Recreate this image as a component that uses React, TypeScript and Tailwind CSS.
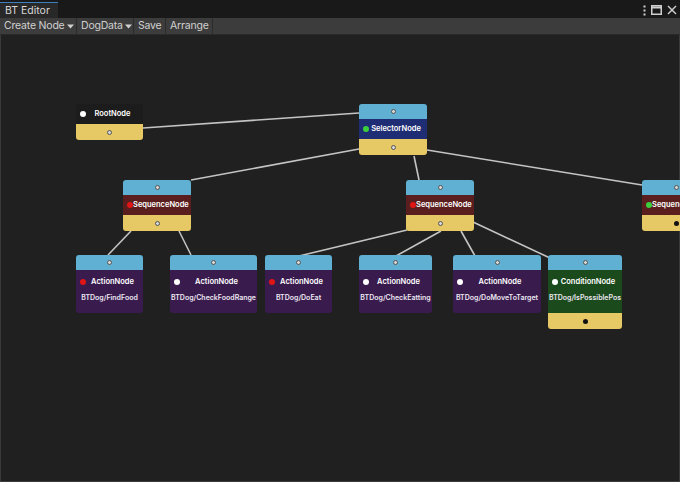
import { Fragment } from "react";

type NodeProps = {
  x: number;
  y: number;
  w: number;
  title: string;
  sub?: string;
  body: string;
  dot: string;
  topPort?: boolean;
  bottomPort?: "ring" | "solid";
  tall?: boolean;
};

function Port({ solid }: { solid?: boolean }) {
  return solid ? (
    <span className="block h-[5px] w-[5px] rounded-full bg-[#111]" />
  ) : (
    <span className="block h-[5px] w-[5px] rounded-full border border-[#555] bg-[#d8d8d8]" />
  );
}

function BTNode({ x, y, w, title, sub, body, dot, topPort = true, bottomPort, tall }: NodeProps) {
  return (
    <div className="absolute flex flex-col text-white" style={{ left: x, top: y, width: w }}>
      {topPort && (
        <div className="flex h-[15px] items-center justify-center rounded-t-[3px] bg-[#5fb0d2]">
          <Port />
        </div>
      )}
      <div
        className={`flex flex-col justify-center px-[4px] ${tall ? "h-[43px] gap-[8px] pb-[4px]" : "h-[20px]"} ${
          bottomPort ? "" : "rounded-b-[3px]"
        }`}
        style={{ backgroundColor: body }}
      >
        <div className="flex items-center">
          <span className="block h-[6px] w-[6px] shrink-0 rounded-full" style={{ backgroundColor: dot }} />
          <span className="flex-1 whitespace-nowrap text-center text-[7.5px] font-semibold leading-none">{title}</span>
        </div>
        {sub && (
          <div className="-mx-[4px] whitespace-nowrap text-center text-[7px] font-semibold leading-none text-[#ebe6f0]">
            {sub}
          </div>
        )}
      </div>
      {bottomPort && (
        <div className="flex h-[16px] items-center justify-center rounded-b-[3px] bg-[#e6c964]">
          <Port solid={bottomPort === "solid"} />
        </div>
      )}
    </div>
  );
}

const edges: [number, number, number, number][] = [
  [142, 128, 358, 113],
  [190, 180, 358, 149],
  [413, 156, 418, 180],
  [426, 150, 641, 185],
  [130, 231, 107, 255],
  [178, 231, 190, 255],
  [406, 230, 298, 256],
  [440, 231, 395, 256],
  [460, 231, 474, 256],
  [472, 222, 549, 258],
];

const buttons = [
  { label: "Create Node", caret: true, w: "w-[77px]" },
  { label: "DogData", caret: true, w: "w-[57px]" },
  { label: "Save", caret: false, w: "w-[32px]" },
  { label: "Arrange", caret: false, w: "w-[47px]" },
];

export default function App() {
  return (
    <div className="flex h-[482px] w-[680px] flex-col overflow-hidden bg-[#191919] font-['Inter',sans-serif] text-[#d2d2d2]">
      <div className="flex h-[18px] items-end justify-between bg-[#191919]">
        <div className="flex h-[16px] w-[58px] items-center whitespace-nowrap border-t border-[#3d7fc1] bg-[#282828] pl-[5px] text-[10.5px] text-[#d8d8d8]">
          BT Editor
        </div>
        <div className="flex h-[16px] items-center gap-[5px] pr-[3px] text-[#cfcfcf]">
          <svg width="3" height="11" viewBox="0 0 3 11" fill="#cfcfcf">
            <rect x="0.5" y="0.5" width="2" height="2" />
            <rect x="0.5" y="4.5" width="2" height="2" />
            <rect x="0.5" y="8.5" width="2" height="2" />
          </svg>
          <svg width="11" height="10" viewBox="0 0 11 10" fill="none" stroke="#cfcfcf">
            <rect x="0.75" y="0.75" width="9.5" height="8.5" strokeWidth="1.5" />
            <line x1="0.75" y1="2.5" x2="10.25" y2="2.5" strokeWidth="2" />
          </svg>
          <svg width="10" height="10" viewBox="0 0 10 10" stroke="#cfcfcf" strokeWidth="1.4">
            <line x1="1" y1="1" x2="9" y2="9" />
            <line x1="9" y1="1" x2="1" y2="9" />
          </svg>
        </div>
      </div>
      <div className="flex h-[17px] items-stretch border-b border-[#2a2a2a] bg-[#3c3c3c] text-[10.5px] tracking-[-0.2px] text-[#d0d0d0]">
        {buttons.map((b) => (
          <Fragment key={b.label}>
            <div
              className={`flex ${b.w} shrink-0 items-center gap-[2px] whitespace-nowrap border-r border-[#2b2b2b] pl-[4px]`}
            >
              <span>{b.label}</span>
              {b.caret && (
                <svg className="shrink-0" width="7" height="5" viewBox="0 0 7 5" fill="#d0d0d0">
                  <path d="M0 0.5h7L3.5 4.5z" />
                </svg>
              )}
            </div>
          </Fragment>
        ))}
      </div>
      <div className="relative flex-1 border-x border-b border-[#3a3a3a] bg-[#202020]">
        <svg className="absolute left-0 top-[-35px]" width="680" height="482" viewBox="0 0 680 482">
          {edges.map(([x1, y1, x2, y2], i) => (
            <line key={i} x1={x1} y1={y1} x2={x2} y2={y2} stroke="#c4c4c4" strokeWidth="1.6" />
          ))}
        </svg>
        <div className="absolute left-0 top-[-35px] h-[482px] w-[680px]">
          <div className="absolute left-[75px] top-[104px] flex w-[67px] flex-col">
            <div className="flex h-[20px] items-center rounded-t-[3px] bg-[#1c1c1c] px-[4px] text-white">
              <span className="block h-[6px] w-[6px] rounded-full bg-white" />
              <span className="flex-1 text-center text-[7.5px] font-semibold leading-none">RootNode</span>
            </div>
            <div className="flex h-[16px] items-center justify-center rounded-b-[3px] bg-[#e6c964]">
              <Port />
            </div>
          </div>
          <BTNode x={358} y={104} w={68} title="SelectorNode" body="#1f2e74" dot="#3ccf3c" bottomPort="ring" />
          <BTNode x={122} y={180} w={68} title="SequenceNode" body="#5a1e1e" dot="#e01515" bottomPort="ring" />
          <BTNode x={405} y={180} w={68} title="SequenceNode" body="#5a1e1e" dot="#e01515" bottomPort="ring" />
          <BTNode x={641} y={180} w={68} title="SequenceNode" body="#5a1e1e" dot="#3ccf3c" bottomPort="solid" />
          <BTNode x={75} y={255} w={67} tall title="ActionNode" sub="BTDog/FindFood" body="#3a1b4e" dot="#e01515" />
          <BTNode x={169} y={255} w={87} tall title="ActionNode" sub="BTDog/CheckFoodRange" body="#3a1b4e" dot="#ffffff" />
          <BTNode x={264} y={255} w={67} tall title="ActionNode" sub="BTDog/DoEat" body="#3a1b4e" dot="#e01515" />
          <BTNode x={358} y={255} w={73} tall title="ActionNode" sub="BTDog/CheckEatting" body="#3a1b4e" dot="#ffffff" />
          <BTNode x={452} y={255} w={88} tall title="ActionNode" sub="BTDog/DoMoveToTarget" body="#3a1b4e" dot="#ffffff" />
          <BTNode x={547} y={255} w={74} tall title="ConditionNode" sub="BTDog/IsPossiblePos" body="#1b4a1d" dot="#ffffff" bottomPort="solid" />
        </div>
      </div>
    </div>
  );
}
